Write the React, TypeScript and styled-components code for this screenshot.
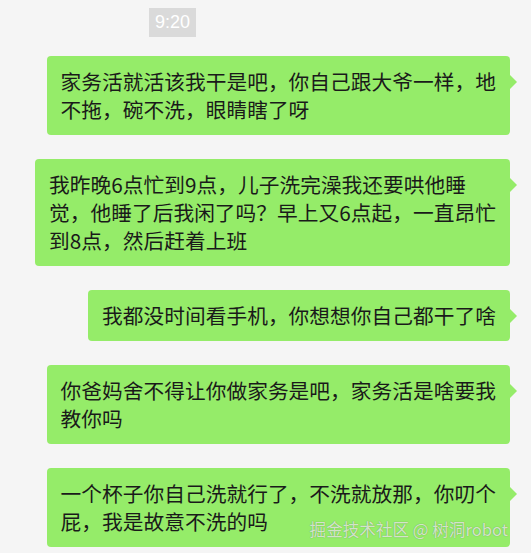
import React from "react";
import styled, { createGlobalStyle } from "styled-components";

const GlobalStyle = createGlobalStyle`
  html, body {
    margin: 0;
    padding: 0;
    background: #f5f5f5;
  }
  body {
    font-family: "Noto Sans CJK SC", "Noto Sans", sans-serif;
  }
`;

const ChatWrapper = styled.div`
  position: relative;
  width: 531px;
  height: 553px;
  overflow: hidden;
  background: #f5f5f5;
  padding: 8px 21px 0 0;
  box-sizing: border-box;
  display: flex;
  flex-direction: column;
`;

const TimeBadge = styled.div`
  align-self: flex-start;
  margin-left: 149px;
  width: 47px;
  height: 29px;
  background: #dadada;
  color: #ffffff;
  font-family: "Liberation Sans", Arial, sans-serif;
  font-size: 18px;
  display: flex;
  align-items: center;
  justify-content: center;
`;

const MessageList = styled.div`
  display: flex;
  flex-direction: column;
  align-items: flex-end;
  gap: 24px;
  margin-top: 19px;
`;

const Bubble = styled.div`
  position: relative;
  background: #95ec69;
  border-radius: 4px;
  padding: 11px 14px 12px;
  color: #1a1a1a;
  font-size: 20.7px;
  letter-spacing: 0.05px;
  line-height: 28px;
  white-space: nowrap;

  &::after {
    content: "";
    position: absolute;
    right: -7px;
    top: 19px;
    border-top: 7px solid transparent;
    border-bottom: 7px solid transparent;
    border-left: 7px solid #95ec69;
  }
`;

const Watermark = styled.div`
  position: absolute;
  right: 23px;
  bottom: 14px;
  font-size: 16.6px;
  line-height: 20px;
  color: rgba(255, 255, 255, 0.72);
  text-shadow: 0 0 1px rgba(0, 0, 0, 0.4);
  white-space: nowrap;
`;

const messages: string[][] = [
  ["家务活就活该我干是吧，你自己跟大爷一样，地", "不拖，碗不洗，眼睛瞎了呀"],
  [
    "我昨晚6点忙到9点，儿子洗完澡我还要哄他睡",
    "觉，他睡了后我闲了吗？早上又6点起，一直昂忙",
    "到8点，然后赶着上班",
  ],
  ["我都没时间看手机，你想想你自己都干了啥"],
  ["你爸妈舍不得让你做家务是吧，家务活是啥要我", "教你吗"],
  ["一个杯子你自己洗就行了，不洗就放那，你叨个", "屁，我是故意不洗的吗"],
];

const App = () => {
  return (
    <>
      <GlobalStyle />
      <ChatWrapper>
        <TimeBadge>9:20</TimeBadge>
        <MessageList>
          {messages.map((lines, i) => (
            <Bubble key={i}>
              {lines.map((line, j) => (
                <React.Fragment key={j}>
                  {j > 0 && <br />}
                  {line}
                </React.Fragment>
              ))}
            </Bubble>
          ))}
        </MessageList>
        <Watermark>掘金技术社区 @ 树洞robot</Watermark>
      </ChatWrapper>
    </>
  );
};

export default App;
